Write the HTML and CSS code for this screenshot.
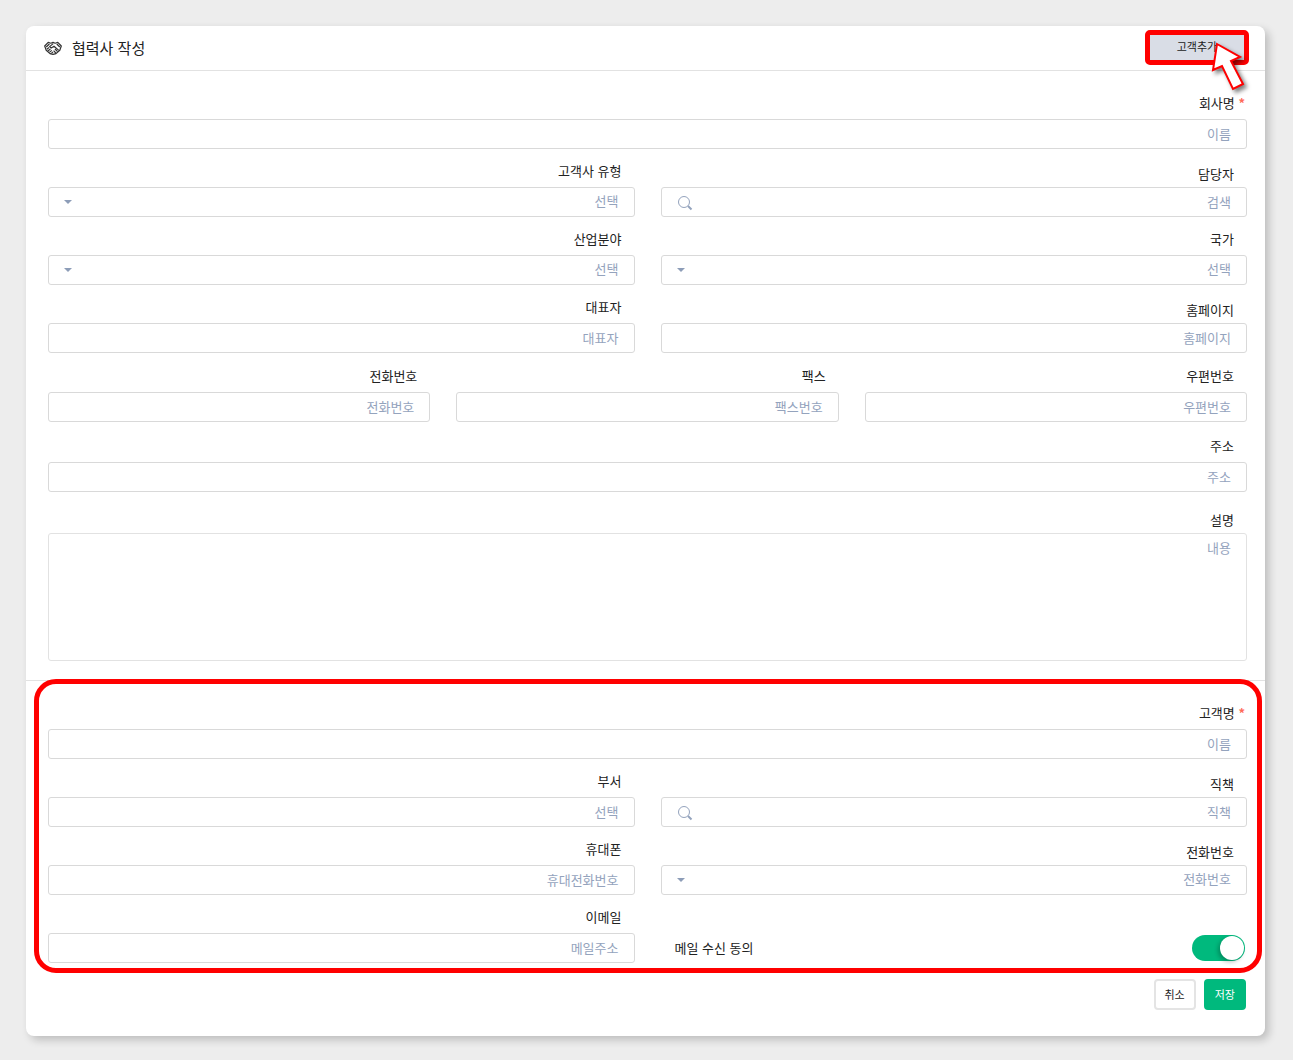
FILE: index.html
```html
<!DOCTYPE html>
<html lang="ko">
<head>
<meta charset="utf-8">
<meta name="viewport" content="width=device-width, initial-scale=1">
<title>협력사 작성</title>
<link rel="stylesheet" href="styles.css">
</head>
<body>
<main class="card">
  <header class="card-header">
    <svg class="title-icon" viewBox="0 0 18 14" aria-hidden="true">
      <path d="M.7 5 4.2 1.4 6.8 2.2 9 1.4 11.2 2.2 13.8 1.4 17.3 5 15.8 9.2 12 12.6 9 13.4 6 12.6 2.2 9.2Z"/>
      <path d="M2.2 6 5.4 3M9.2 2.6 5.6 5.6 7.2 7 10 5.2 14.8 9.4M2.8 8.2 5 6.6M3.8 10 6.4 8M5.4 11.4 7.8 9.4M7.4 12.4 9 10.8M12.8 3 15.8 6M11 8 13.6 10.6M9.6 9.6 11.8 12"/>
    </svg>
    <h1 class="title">협력사 작성</h1>
    <div class="add-wrap">
      <button class="add-button" type="button">고객추가</button>
      <svg class="pointer" viewBox="0 0 40 54" aria-hidden="true">
        <path d="M7 4 30 17 21 21 33 44 23 49 12 26 3 30Z"/>
      </svg>
    </div>
  </header>
  <form>
    <section class="section">
      <div class="row">
        <div class="field">
          <label class="label label-required" for="company">회사명 <span class="star">*</span></label>
          <input class="control" id="company" type="text" placeholder="이름">
        </div>
      </div>
      <div class="row two">
        <div class="field">
          <label class="label" for="type">고객사 유형</label>
          <div class="box"><select class="control" id="type"><option>선택</option></select><span class="caret"></span></div>
        </div>
        <div class="field">
          <label class="label label-low" for="manager">담당자</label>
          <div class="box"><input class="control" id="manager" type="text" placeholder="검색">
            <svg class="search" viewBox="0 0 16 16" aria-hidden="true"><circle cx="7" cy="7" r="5.5"/><path d="m11 11 3.5 3.5"/></svg></div>
        </div>
      </div>
      <div class="row two">
        <div class="field">
          <label class="label" for="industry">산업분야</label>
          <div class="box"><select class="control" id="industry"><option>선택</option></select><span class="caret"></span></div>
        </div>
        <div class="field">
          <label class="label" for="country">국가</label>
          <div class="box"><select class="control" id="country"><option>선택</option></select><span class="caret"></span></div>
        </div>
      </div>
      <div class="row two">
        <div class="field">
          <label class="label" for="ceo">대표자</label>
          <input class="control" id="ceo" type="text" placeholder="대표자">
        </div>
        <div class="field">
          <label class="label label-low" for="homepage">홈페이지</label>
          <input class="control" id="homepage" type="text" placeholder="홈페이지">
        </div>
      </div>
      <div class="row three">
        <div class="field">
          <label class="label" for="phone">전화번호</label>
          <input class="control" id="phone" type="tel" placeholder="전화번호">
        </div>
        <div class="field">
          <label class="label" for="fax">팩스</label>
          <input class="control" id="fax" type="tel" placeholder="팩스번호">
        </div>
        <div class="field">
          <label class="label" for="zip">우편번호</label>
          <input class="control" id="zip" type="text" placeholder="우편번호">
        </div>
      </div>
      <div class="row spaced">
        <div class="field">
          <label class="label" for="address">주소</label>
          <input class="control" id="address" type="text" placeholder="주소">
        </div>
      </div>
      <div class="row memo-row">
        <div class="field">
          <label class="label label-low" for="memo">설명</label>
          <textarea class="control memo" id="memo" placeholder="내용"></textarea>
        </div>
      </div>
    </section>

    <section class="section customer">
      <div class="row">
        <div class="field">
          <label class="label label-required" for="customer">고객명 <span class="star">*</span></label>
          <input class="control" id="customer" type="text" placeholder="이름">
        </div>
      </div>
      <div class="row two">
        <div class="field">
          <label class="label" for="dept">부서</label>
          <input class="control" id="dept" type="text" placeholder="선택">
        </div>
        <div class="field">
          <label class="label label-low" for="position">직책</label>
          <div class="box"><input class="control" id="position" type="text" placeholder="직책">
            <svg class="search" viewBox="0 0 16 16" aria-hidden="true"><circle cx="7" cy="7" r="5.5"/><path d="m11 11 3.5 3.5"/></svg></div>
        </div>
      </div>
      <div class="row two">
        <div class="field">
          <label class="label" for="mobile">휴대폰</label>
          <input class="control" id="mobile" type="tel" placeholder="휴대전화번호">
        </div>
        <div class="field">
          <label class="label label-low" for="tel">전화번호</label>
          <div class="box"><select class="control" id="tel"><option>전화번호</option></select><span class="caret"></span></div>
        </div>
      </div>
      <div class="row two">
        <div class="field">
          <label class="label" for="email">이메일</label>
          <input class="control" id="email" type="email" placeholder="메일주소">
        </div>
        <div class="consent">
          <label for="consent">메일 수신 동의</label>
          <input class="toggle" id="consent" type="checkbox" role="switch" checked>
        </div>
      </div>
    </section>

    <footer class="actions">
      <button class="button" type="button">취소</button>
      <button class="button primary" type="submit">저장</button>
    </footer>
  </form>
</main>
</body>
</html>
```
FILE: styles.css
```css
* { box-sizing: border-box; }
body {
  margin: 0;
  padding: 26px 28px 24px 26px;
  background: #ededed;
  color: #222;
  font: 13px/20px "Noto Sans CJK KR", sans-serif;
}
button, input, select, textarea { font: inherit; }
.card {
  background: #fff;
  border-radius: 8px;
  box-shadow: 4px 4px 8px rgba(0, 0, 0, .2);
}

/* Header */
.card-header {
  display: flex;
  align-items: center;
  height: 45px;
  padding: 0 16px 0 18px;
  border-bottom: 1px solid #e2e2e2;
}
.title-icon {
  width: 18px;
  height: 14px;
  margin-right: 10px;
  fill: none;
  stroke: #333;
  stroke-width: 1.2;
  stroke-linejoin: round;
}
.title { margin: 0; font-size: 15px; font-weight: 400; }
.add-wrap { position: relative; margin-left: auto; margin-bottom: 2px; }
.add-button {
  display: block;
  width: 104px;
  height: 35px;
  padding: 0 0 2px;
  border: 5px solid #f00;
  border-radius: 5px;
  background: #d9dde6;
  color: #222;
  font-size: 11px;
}
.pointer {
  position: absolute;
  top: 10px;
  left: 65px;
  z-index: 1;
  width: 40px;
  height: 54px;
  overflow: visible;
  fill: #fff;
  stroke: #f00;
  stroke-width: 2;
  filter: drop-shadow(3px 3px 2px rgba(0, 0, 0, .5));
}

/* Form grid */
.section { padding: 22px 18px 0 22px; }
.row { display: grid; gap: 26px; align-items: end; }
.row + .row { margin-top: 12px; }
.row + .three { margin-top: 13px; }
.row + .spaced { margin-top: 14px; }
.row + .memo-row { margin-top: 18px; }
.two { grid-template-columns: repeat(2, minmax(0, 1fr)); }
.three { grid-template-columns: repeat(3, minmax(0, 1fr)); }
.field { display: flex; flex-direction: column; }
.label {
  align-self: flex-end;
  margin-bottom: 6px;
  padding-right: 13px;
}
.label-low { margin-bottom: 3px; }
.label-required { padding-right: 2px; }
.star { color: #ff6b5c; font-weight: 700; }
.box { position: relative; }
.control {
  display: block;
  width: 100%;
  height: 30px;
  margin: 0;
  padding: 0 15px 2px;
  border: 1px solid #d9d9d9;
  border-radius: 3px;
  outline: 0;
  background: #fff;
  color: #94a3bd;
  text-align: right;
  text-align-last: right;
  appearance: none;
}
.control::placeholder { color: #94a3bd; opacity: 1; }
.memo { height: 128px; padding-top: 4px; border-color: #e2e2e2; resize: none; }
.caret {
  position: absolute;
  top: 13px;
  left: 16px;
  border: 4px solid transparent;
  border-top-color: #8d9db8;
  border-bottom: 0;
  pointer-events: none;
}
.search {
  position: absolute;
  top: 8px;
  left: 16px;
  width: 16px;
  height: 16px;
  fill: none;
  stroke: #94a3bd;
}
.search path { stroke-width: 2; }

/* Customer section with its highlight frame */
.customer {
  position: relative;
  margin-top: 19px;
  border-top: 1px solid #e2e2e2;
}
.customer::after {
  content: "";
  position: absolute;
  inset: -2px 3px -10px 8px;
  border: 5px solid #f00;
  border-radius: 22px;
  pointer-events: none;
}
.consent {
  display: flex;
  align-items: center;
  justify-content: space-between;
  height: 30px;
  padding: 0 2px 0 14px;
}
.toggle {
  width: 53px;
  height: 26px;
  margin: 0;
  padding: 1px;
  border-radius: 13px;
  background: #aaa;
  appearance: none;
}
.toggle::before {
  content: "";
  display: block;
  width: 24px;
  height: 24px;
  border-radius: 50%;
  background: #fff;
  box-shadow: -2px 2px 4px rgba(0, 0, 0, .25);
}
.toggle:checked { background: #00b97d; }
.toggle:checked::before { margin-left: auto; }

/* Footer */
.actions {
  display: flex;
  justify-content: flex-end;
  gap: 8px;
  padding: 16px 19px 26px;
}
.button {
  height: 31px;
  padding: 0 9px 2px;
  border: 2px solid #e4e4e4;
  border-radius: 4px;
  background: #fff;
  color: #222;
  font-size: 11px;
}
.primary { border-color: #00b97d; background: #00b97d; color: #fff; }
```
